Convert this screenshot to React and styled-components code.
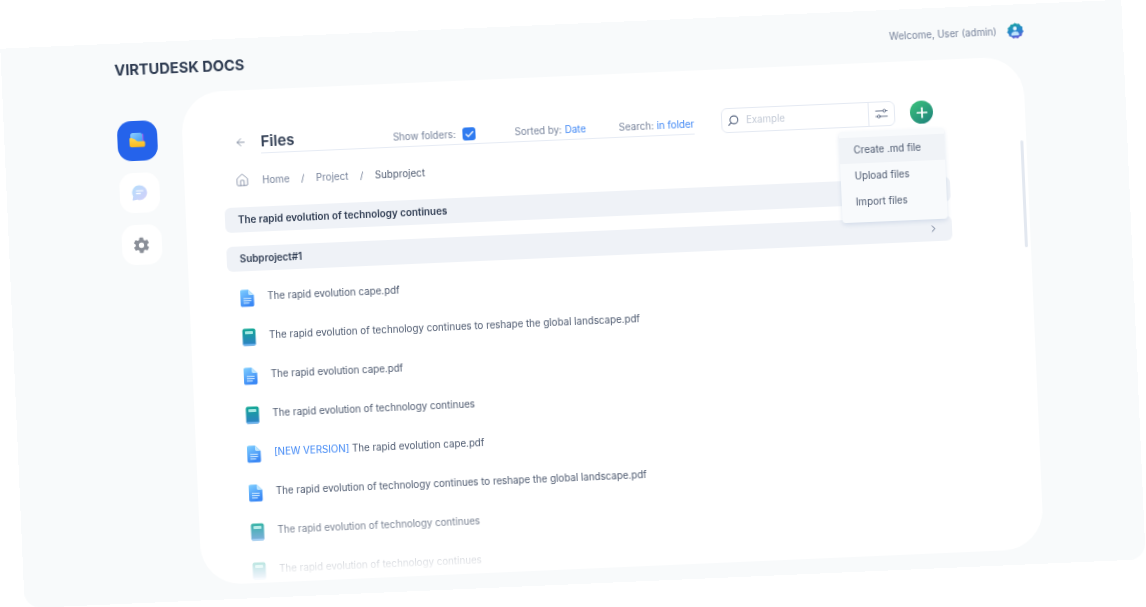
import React from 'react';
import styled, { createGlobalStyle } from 'styled-components';
import { ArrowLeft, Check, ChevronRight, House, Plus } from 'lucide-react';
import { IoSettingsSharp } from 'react-icons/io5';

const GlobalStyle = createGlobalStyle`
  html, body {
    margin: 0;
    height: 100%;
    background: #ffffff;
    overflow: hidden;
  }
  * { box-sizing: border-box; }
`;

const Stage = styled.div`
  width: 100vw;
  height: 100vh;
  display: flex;
  align-items: center;
  justify-content: center;
  overflow: hidden;
  font-family: Inter, "Liberation Sans", sans-serif;
`;

const Panel = styled.div`
  flex: 0 0 auto;
  width: 1122px;
  height: 560px;
  display: flex;
  flex-direction: column;
  background: #f8fafb;
  border-radius: 0 0 16px 16px;
  transform: rotate(-2.5deg);
  will-change: transform;
`;

const Header = styled.header`
  height: 52px;
  flex: 0 0 auto;
  display: flex;
  align-items: center;
  justify-content: space-between;
  padding: 2px 99px 0 113px;
`;

const Logo = styled.div`
  font-size: 14.6px;
  font-weight: 700;
  color: #2d3a50;
`;

const User = styled.div`
  display: flex;
  align-items: center;
  gap: 10px;
  margin-bottom: 2px;
  font-size: 9.7px;
  color: #76829a;
`;

const Body = styled.div`
  flex: 1;
  min-height: 0;
  display: flex;
  padding-bottom: 15px;
`;

const Sidebar = styled.nav`
  width: 178px;
  flex: 0 0 auto;
  display: flex;
  flex-direction: column;
  gap: 12px;
  padding: 26px 0 0 112.5px;
`;

const NavButton = styled.div`
  width: 40px;
  height: 40px;
  border-radius: 14px;
  display: flex;
  align-items: center;
  justify-content: center;
  background: ${(p) => (p.$active ? '#2563eb' : '#ffffff')};
  color: #8a8f98;
`;

const Card = styled.main`
  position: relative;
  width: 843px;
  display: flex;
  flex-direction: column;
  padding: 39px 78px 0 39px;
  background: #ffffff;
  border-radius: 40px;
  overflow: hidden;
`;

const Toolbar = styled.div`
  display: flex;
  align-items: center;
  height: 25px;
  flex: 0 0 auto;
`;

const BackButton = styled.div`
  width: 39px;
  flex: 0 0 auto;
  padding-left: 13px;
  display: flex;
  color: #5d6b85;
`;

const TitleBar = styled.div`
  width: 434px;
  height: 25px;
  display: flex;
  align-items: center;
  border-bottom: 1px solid #e6ebf4;
`;

const Title = styled.h1`
  margin: 1px 93px 0 0;
  width: 40px;
  font-size: 15px;
  font-weight: 600;
  color: #2d3a50;
`;

const Option = styled.div`
  display: flex;
  align-items: center;
  gap: 3px;
  margin: 5px 0 0 ${(p) => p.$left || 0}px;
  font-size: 9.7px;
  color: #76829a;
  white-space: nowrap;
`;

const Accent = styled.span`
  color: #3f87f5;
`;

const CheckBox = styled.span`
  width: 13px;
  height: 13px;
  margin-left: 4px;
  border-radius: 3px;
  background: #2f7bf0;
  color: #ffffff;
  display: flex;
  align-items: center;
  justify-content: center;
`;

const Search = styled.div`
  width: 174px;
  height: 25px;
  margin-left: 27px;
  display: flex;
  align-items: center;
  border: 1px solid #e4e9f2;
  border-radius: 6px;
  background: #ffffff;
`;

const SearchField = styled.div`
  flex: 1;
  display: flex;
  align-items: center;
  gap: 7px;
  padding-left: 5px;
  font-size: 9.7px;
  color: #c3cad6;
`;

const FilterButton = styled.div`
  width: 26px;
  height: 100%;
  display: flex;
  align-items: center;
  justify-content: center;
  border-left: 1px solid #e4e9f2;
`;

const AddButton = styled.div`
  width: 23px;
  height: 23px;
  margin-left: 15px;
  border-radius: 50%;
  display: flex;
  align-items: center;
  justify-content: center;
  color: #ffffff;
  background: linear-gradient(145deg, #3cc47c, #1d7f7a);
`;

const Dropdown = styled.div`
  position: absolute;
  z-index: 2;
  left: 656px;
  top: 68px;
  width: 105px;
  height: 91px;
  padding-top: 6px;
  background: #f8fafc;
  border-radius: 3px;
  box-shadow: 0 2px 4px rgba(120, 145, 190, 0.22);
`;

const DropdownItem = styled.div`
  height: 26px;
  display: flex;
  align-items: center;
  padding: 0 0 1px 14px;
  font-size: 9.75px;
  color: #4c586e;
  background: ${(p) => (p.$active ? '#f0f3f7' : 'transparent')};
`;

const Breadcrumb = styled.div`
  height: 16px;
  flex: 0 0 auto;
  margin-top: 18px;
  display: flex;
  align-items: center;
  font-size: 9.75px;
  color: #76829a;
`;

const HomeIcon = styled.span`
  width: 39px;
  padding-left: 12px;
  display: flex;
  color: #76829a;
`;

const Slash = styled.span`
  margin: 0 11.5px;
`;

const Current = styled.span`
  color: #4c586e;
`;

const Section = styled.div`
  height: 25px;
  flex: 0 0 auto;
  margin-top: ${(p) => p.$top}px;
  padding: 0 13px 1px;
  display: flex;
  align-items: center;
  justify-content: space-between;
  border-radius: 6px;
  background: #eff2f7;
  font-size: 9.85px;
  font-weight: 600;
  color: #2d3a50;
`;

const SectionChevron = styled.span`
  display: flex;
  color: #5d6b85;
`;

const FileList = styled.div`
  flex: 1;
  min-height: 0;
  margin-top: 7px;
  overflow: hidden;
  -webkit-mask-image: linear-gradient(to top, transparent 0, #000 70px);
  mask-image: linear-gradient(to top, transparent 0, #000 70px);
`;

const FileRow = styled.div`
  height: 39px;
  display: flex;
  align-items: center;
  gap: 13px;
  padding-left: 12px;
  font-size: 9.75px;
  color: #4c586e;
  white-space: nowrap;
`;

const FileName = styled.span`
  margin-bottom: 2px;
`;

const Scrollbar = styled.div`
  position: absolute;
  left: 837px;
  top: 84px;
  width: 3px;
  height: 107px;
  border-radius: 2px;
  background: #e3e8f0;
`;

function FolderIcon() {
  return (
    <svg width="20" height="20" viewBox="0 0 20 20">
      <defs>
        <linearGradient id="folder-paper" x1="0" y1="0" x2="1" y2="1">
          <stop offset="0" stopColor="#8fd0ff" />
          <stop offset="1" stopColor="#3f9cf5" />
        </linearGradient>
        <linearGradient id="folder-body" x1="0" y1="0" x2="0" y2="1">
          <stop offset="0" stopColor="#ffd84d" />
          <stop offset="1" stopColor="#f9b81e" />
        </linearGradient>
      </defs>
      <rect x="14.6" y="3" width="1.6" height="9" rx="0.8" fill="#9b5cf0" />
      <path d="M3 4.5A2.5 2.5 0 0 1 5.500 2h7A2.500 2.500 0 0 1 15 4.500V11H3z" fill="url(#folder-paper)" />
      <path d="M2 8.500C2 7.300 3 6.500 4.200 7l3 1.300c1 .5 1.600 1.800 2.800 2.200h6.200c.7 0 1.300.6 1.300 1.300v2.700c0 1-.8 1.800-1.800 1.800H4c-1.100 0-2-.9-2-2z" fill="url(#folder-body)" />
    </svg>
  );
}

function ChatIcon() {
  return (
    <svg width="16" height="16" viewBox="0 0 16 16">
      <defs>
        <linearGradient id="chat-fill" x1="0" y1="0" x2="1" y2="1">
          <stop offset="0" stopColor="#b4defc" />
          <stop offset="1" stopColor="#d4cff9" />
        </linearGradient>
      </defs>
      <path d="M8 .6a7.300 7.300 0 1 1-2.600 14.100L1.400 15.600c-.5.100-.9-.3-.8-.8l.7-3.400A7.300 7.300 0 0 1 8 .6z" fill="url(#chat-fill)" />
      <path d="M4.800 6h6.400M4.800 8.700h3.800" stroke="#ffffff" strokeWidth="1.200" strokeLinecap="round" />
    </svg>
  );
}

function AvatarIcon() {
  return (
    <svg width="17" height="17" viewBox="0 0 17 17">
      <defs>
        <linearGradient id="avatar-fill" x1="0.3" y1="0" x2="0.6" y2="1">
          <stop offset="0" stopColor="#17a5a0" />
          <stop offset="0.6" stopColor="#2b83d0" />
          <stop offset="1" stopColor="#6a5ad8" />
        </linearGradient>
      </defs>
      <path d="M8.500.4l2.100 1.200 2.400-.1 1.100 2.100 2 1.200-.2 2.400 1.100 2.100-1.500 1.900-.4 2.400-2.300.7-1.700 1.700-2.300-.7-2.300.7-1.700-1.700-2.300-.7-.4-2.400L.5 9.800l1.100-2.100-.2-2.400 2-1.200L4.500 2l2.400-.3z" fill="url(#avatar-fill)" />
      <circle cx="8.500" cy="6" r="2" fill="#e8f6ff" />
      <path d="M4.500 12.200c0-2 1.700-3.300 4-3.300s4 1.300 4 3.300c0 .4-.3.700-.7.700H5.200c-.4 0-.7-.3-.7-.7z" fill="#bfe3fb" />
    </svg>
  );
}

function SearchIcon() {
  return (
    <svg width="12" height="12" viewBox="0 0 12 12" fill="none" stroke="#5d6b85" strokeWidth="1.100" strokeLinecap="round">
      <circle cx="6.800" cy="5" r="3.900" />
      <path d="M3.900 7.700L1.600 10.300" />
    </svg>
  );
}

function FilterIcon() {
  return (
    <svg width="13" height="13" viewBox="0 0 13 13" fill="none" stroke="#5d6b85" strokeWidth="0.900" strokeLinecap="round">
      <path d="M.8 3.500h7.200M10.800 3.500h1.400M.8 9h1.600M5.200 9h7" />
      <circle cx="9.400" cy="3.500" r="1.400" />
      <circle cx="3.800" cy="9" r="1.400" />
    </svg>
  );
}

function DocIcon() {
  return (
    <svg width="14" height="18" viewBox="0 0 14 18">
      <defs>
        <linearGradient id="doc-fill" x1="0" y1="0" x2="0.4" y2="1">
          <stop offset="0" stopColor="#7fcfff" />
          <stop offset="1" stopColor="#3a88f5" />
        </linearGradient>
      </defs>
      <path d="M1.800.5h6.200L13.500 6v9.700c0 1-.8 1.800-1.800 1.800H1.800C.8 17.500 0 16.700 0 15.700V2.300C0 1.300.8.500 1.800.5z" fill="url(#doc-fill)" />
      <path d="M8 .5L13.500 6H9.500C8.700 6 8 5.300 8 4.500z" fill="#bde5fd" />
      <path d="M3.300 9.300h7M3.300 11.600h7M3.300 13.900h5" stroke="#d3ecff" strokeWidth="1" strokeLinecap="round" />
    </svg>
  );
}

function BookIcon() {
  return (
    <svg width="14" height="18" viewBox="0 0 14 18">
      <defs>
        <linearGradient id="book-fill" x1="0" y1="0" x2="0" y2="1">
          <stop offset="0" stopColor="#12a795" />
          <stop offset="1" stopColor="#2f7fc6" />
        </linearGradient>
      </defs>
      <rect x="0.500" y="0.500" width="13" height="17" rx="2" fill="url(#book-fill)" />
      <rect x="3" y="3" width="8" height="3" rx="0.800" fill="#a5e8e3" />
      <path d="M.5 15.800h13v.2c0 .8-.7 1.500-1.500 1.500H2c-.8 0-1.500-.7-1.500-1.500z" fill="#6ab2ec" />
    </svg>
  );
}

const SHORT = 'The rapid evolution of technology continues';
const LONG = 'The rapid evolution of technology continues to reshape the global landscape.pdf';
const CAPE = 'The rapid evolution cape.pdf';

const files = [
  { kind: 'doc', name: CAPE },
  { kind: 'book', name: LONG },
  { kind: 'doc', name: CAPE },
  { kind: 'book', name: SHORT },
  { kind: 'doc', name: CAPE, tag: '[NEW VERSION]' },
  { kind: 'doc', name: LONG },
  { kind: 'book', name: SHORT },
  { kind: 'book', name: SHORT },
];

export default function App() {
  return (
    <>
      <GlobalStyle />
      <Stage>
        <Panel>
          <Header>
            <Logo>VIRTUDESK DOCS</Logo>
            <User>
              Welcome, User (admin)
              <AvatarIcon />
            </User>
          </Header>
          <Body>
            <Sidebar>
              <NavButton $active><FolderIcon /></NavButton>
              <NavButton><ChatIcon /></NavButton>
              <NavButton><IoSettingsSharp size={17} /></NavButton>
            </Sidebar>
            <Card>
              <Toolbar>
                <BackButton><ArrowLeft size={12} strokeWidth={1.4} /></BackButton>
                <TitleBar>
                  <Title>Files</Title>
                  <Option>
                    Show folders:
                    <CheckBox><Check size={10} strokeWidth={3} /></CheckBox>
                  </Option>
                  <Option $left={39}>Sorted by: <Accent>Date</Accent></Option>
                  <Option $left={33}>Search: <Accent>in folder</Accent></Option>
                </TitleBar>
                <Search>
                  <SearchField><SearchIcon />Example</SearchField>
                  <FilterButton><FilterIcon /></FilterButton>
                </Search>
                <AddButton><Plus size={16} strokeWidth={2.6} /></AddButton>
              </Toolbar>
              <Dropdown>
                <DropdownItem $active>Create .md file</DropdownItem>
                <DropdownItem>Upload files</DropdownItem>
                <DropdownItem>Import files</DropdownItem>
              </Dropdown>
              <Breadcrumb>
                <HomeIcon><House size={14} strokeWidth={1.3} /></HomeIcon>
                Home<Slash>/</Slash>Project<Slash>/</Slash><Current>Subproject</Current>
              </Breadcrumb>
              <Section $top={19}>
                The rapid evolution of technology continues
                <SectionChevron><ChevronRight size={11} /></SectionChevron>
              </Section>
              <Section $top={14}>
                Subproject#1
                <SectionChevron><ChevronRight size={11} /></SectionChevron>
              </Section>
              <FileList>
                {files.map((file, i) => (
                  <FileRow key={i}>
                    {file.kind === 'doc' ? <DocIcon /> : <BookIcon />}
                    <FileName>
                      {file.tag && <Accent>{file.tag} </Accent>}
                      {file.name}
                    </FileName>
                  </FileRow>
                ))}
              </FileList>
              <Scrollbar />
            </Card>
          </Body>
        </Panel>
      </Stage>
    </>
  );
}
